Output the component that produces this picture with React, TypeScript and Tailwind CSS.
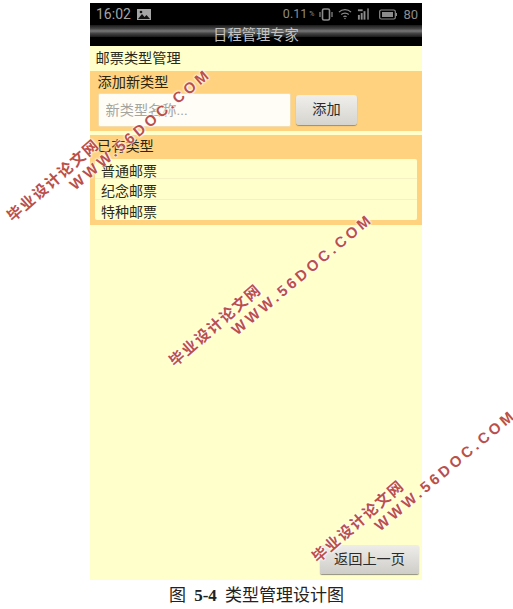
import React from 'react';

const cjk = "font-['Roboto','Noto_Sans_CJK_SC',sans-serif]";

function Watermark({ className }: { className: string }) {
  return (
    <div className={`absolute ${className} pointer-events-none`}>
      <div className="absolute left-[-3px] top-[5px] origin-top-left rotate-[-41deg] whitespace-nowrap text-[15px] leading-[18px] font-bold tracking-[1.6px] text-[#bb4f4a] [text-shadow:0_0_2px_#fff,0_0_2px_#fff,0_0_3px_#fff] font-['Noto_Sans_CJK_SC',sans-serif]">
        毕业设计论文网
      </div>
      <div className="absolute left-[60px] top-[-26px] origin-top-left rotate-[-40deg] whitespace-nowrap text-[15px] leading-[18px] font-bold tracking-[3.4px] text-[#bb4f4a] [text-shadow:0_0_2px_#fff,0_0_2px_#fff,0_0_3px_#fff] font-['Liberation_Sans',sans-serif]">
        WWW.56DOC.COM
      </div>
    </div>
  );
}

function StatusIcons() {
  return (
    <div className="flex items-center gap-[4px] text-[#8c8c8c]">
      <span className="text-[12.500px] leading-none">0.11</span>
      <span className="text-[7px] leading-none -ml-[2px]">%</span>
      <svg width="14" height="13" viewBox="0 0 14 13" fill="none" stroke="currentColor" className="ml-[1px]">
        <rect x="3.500" y="1" width="7" height="11" rx="1.500" strokeWidth="1.600" />
        <path d="M1 4v5M13 4v5" strokeWidth="1.200" />
      </svg>
      <svg width="14" height="12" viewBox="0 0 15 12" fill="none" stroke="currentColor" strokeWidth="1.200" className="ml-[1px]">
        <path d="M1 4c3.500-3.500 9.500-3.500 13 0M3.500 6.500c2.200-2 5.800-2 8 0M5.800 9c1-.8 2.400-.8 3.400 0" />
        <circle cx="7.500" cy="10.700" r=".8" fill="currentColor" stroke="none" />
      </svg>
      <svg width="15" height="12" viewBox="0 0 16 12" fill="currentColor" className="ml-[1px]">
        <rect x="1" y="7" width="2" height="5" />
        <rect x="4" y="5" width="2" height="7" />
        <rect x="7" y="3" width="2" height="9" />
        <rect x="11" y="0" width="1.500" height="12" />
        <rect x="1" y="1" width="5" height="2" />
      </svg>
      <svg width="18" height="11" viewBox="0 0 18 11" fill="none" className="ml-[3px]">
        <rect x=".7" y="1" width="15.600" height="9" rx="1.500" stroke="currentColor" strokeWidth="1.200" />
        <rect x="3" y="3" width="11" height="5" fill="currentColor" />
        <rect x="16.500" y="4" width="1.500" height="3" fill="currentColor" />
      </svg>
      <span className="text-[13px] leading-none ml-[2px]">80</span>
    </div>
  );
}

function ListRow({ label, last }: { label: string; last?: boolean }) {
  return (
    <div className={`h-[20.500px] pl-[6px] pt-[2px] text-[14px] leading-[20px] text-[#2a2a20] ${last ? '' : 'border-b border-[#f5f1c4]'}`}>
      {label}
    </div>
  );
}

export default function App() {
  return (
    <div className={`relative h-[609px] w-[513px] overflow-hidden bg-white ${cjk}`}>
      <div className="ml-[90px] w-[332px] pt-[3px]">
        <div className="flex h-[577px] flex-col bg-[#ffffcb]">
          {/* status bar */}
          <div className="flex h-[22px] items-center justify-between bg-black pl-[6px] pr-[4px] text-[#a5a5a5]">
            <div className="flex items-center gap-[6px]">
              <span className="text-[14px] leading-none">16:02</span>
              <svg width="14" height="11" viewBox="0 0 14 11">
                <rect width="14" height="11" fill="#a5a5a5" />
                <path d="M1 10l4-5 2.500 3 2-2 3.500 4z" fill="#111" />
                <circle cx="4" cy="3" r="1.300" fill="#111" />
              </svg>
            </div>
            <StatusIcons />
          </div>
          {/* title */}
          <div className="relative h-[20.500px] bg-black">
            <div className="h-[12px] bg-[linear-gradient(#1a1a1a_0%,#444_30%,#777_50%,#444_70%,#1a1a1a_100%)]" />
            <div className="absolute inset-x-0 top-[2px] text-center text-[14.300px] leading-[16px] text-[#c4c4c4]">日程管理专家</div>
          </div>
          <div className="flex h-[25px] items-center pl-[5.500px] pt-[1px] text-[14.200px] leading-none text-[#2a2a20]">邮票类型管理</div>
          {/* add form */}
          <div className="h-[60px] bg-[#ffd27f] pl-[7.500px] pt-[1.500px]">
            <div className="text-[14.200px] leading-[20px] text-[#2a2410]">添加新类型</div>
            <div className="mt-[.5px] flex items-center gap-[5px]">
              <input
                readOnly
                placeholder="新类型名称..."
                className="h-[34px] w-[193.500px] rounded-[2px] border border-[#f3dcae] bg-[#fffdf6] pl-[7px] text-[14.200px] text-[#9c9c94] outline-none placeholder:text-[#a5a5a0]"
              />
              <button className="h-[30px] w-[61px] rounded-[3px] bg-[linear-gradient(#f0efec,#d6d4ce)] text-[14.200px] text-[#2a2a2a] shadow-[0_1px_1px_#a08c5c]">添加</button>
            </div>
          </div>
          <div className="h-[4px]" />
          {/* existing types */}
          <div className="h-[90px] bg-[#ffd27f] px-[5px]">
            <div className="h-[24px] pl-[2px] pt-[1px] text-[14.200px] leading-[20px] text-[#2a2410]">已有类型</div>
            <div className="rounded-[2px] bg-[#ffffcb]">
              <ListRow label="普通邮票" />
              <ListRow label="纪念邮票" />
              <ListRow label="特种邮票" last />
            </div>
          </div>
          <div className="flex flex-1 items-end justify-end pb-[6px] pr-[3px]">
            <button className="h-[29px] w-[99px] rounded-[2px] bg-[linear-gradient(#eeedea,#cfcdc8)] text-[14.200px] text-[#2a2a2a] shadow-[0_1px_1px_#8f8f80]">返回上一页</button>
          </div>
        </div>
        <div className="-ml-[90px] mt-[5px] w-[513px] text-center text-[17px] leading-[22px] text-[#222] [word-spacing:4px] font-['Liberation_Serif','Noto_Sans_CJK_SC',serif]">
          图 <b>5-4</b> 类型管理设计图
        </div>
      </div>
      <Watermark className="left-[6px] top-[206px]" />
      <Watermark className="left-[168px] top-[351px]" />
      <Watermark className="left-[311px] top-[547px]" />
    </div>
  );
}
